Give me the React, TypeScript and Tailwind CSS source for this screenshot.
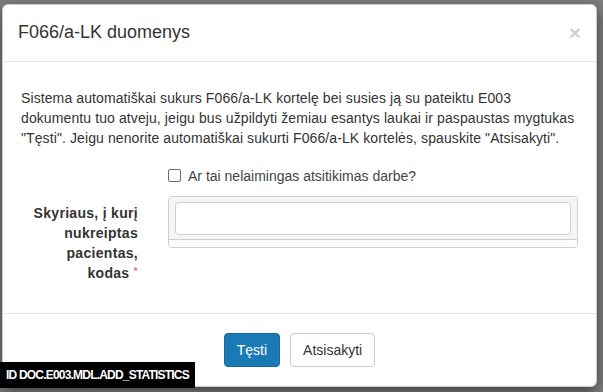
import React from 'react';

const FONT = { fontFamily: '"Liberation Sans", Arial, Helvetica, sans-serif' };

function FakeCheckbox() {
  return <span className="inline-block w-[13px] h-[13px] border border-[#6b6b6b] rounded-[2px] bg-white shrink-0" />;
}

export default function App() {
  return (
    <div className="relative w-[603px] h-[392px] overflow-hidden bg-[#7f7f7f] text-[#333]" style={FONT}>
      <div className="ml-[2px] mt-[4px] w-[595px] bg-white border border-black/20 rounded-[6px] shadow-[0_5px_15px_rgba(0,0,0,0.5)]">
        {/* header */}
        <div className="flex items-start justify-between px-[15px] pt-[15px] pb-[15px] border-b border-[#e5e5e5]">
          <h4 className="text-[18px] leading-[25.7px] text-[#333]">F066/a-LK duomenys</h4>
          <button className="mt-[2px] text-[21px] leading-none font-bold text-black/20">×</button>
        </div>

        {/* body */}
        <div className="px-[18px] pt-[26px] pb-[30px] text-[14px] leading-[20px]">
          <p className="tracking-[0.1px]">
            Sistema automatiškai sukurs F066/a-LK kortelę bei susies ją su pateiktu E003
            <br />
            dokumentu tuo atveju, jeigu bus užpildyti žemiau esantys laukai ir paspaustas mygtukas
            <br />
            "Tęsti". Jeigu nenorite automatiškai sukurti F066/a-LK kortelės, spauskite "Atsisakyti".
          </p>

          <div className="flex mt-[18px]">
            <div className="w-[147px] shrink-0" />
            <label className="flex items-center gap-[7px] text-[#444]">
              <FakeCheckbox />
              <span>Ar tai nelaimingas atsitikimas darbe?</span>
            </label>
          </div>

          <div className="flex gap-[30px] mt-[10px]">
            <label className="w-[117px] shrink-0 pt-[7px] text-right font-bold text-[#333] tracking-[0.3px]">
              Skyriaus, į kurį nukreiptas pacientas, kodas
              <span className="inline-block align-top mt-[3px] ml-[4px] leading-none text-[#d9534f] font-normal text-[11px]">*</span>
            </label>
            <div className="w-[410px] h-[52px] border border-[#cfcfcf] rounded-[4px] overflow-hidden flex flex-col">
              <div className="bg-[#f5f5f5] px-[6px] pt-[5px] pb-[4px] border-b border-[#cfcfcf]">
                <input className="block w-full h-[33px] bg-white border border-[#cfcfcf] rounded-[4px] outline-none" />
              </div>
              <div className="flex-1 bg-[#fcfcfc]" />
            </div>
          </div>
        </div>

        {/* footer */}
        <div className="flex justify-center gap-[10px] border-t border-[#e5e5e5] pt-[19px] pb-[19px] text-[14px] leading-[20px]">
          <button className="h-[34px] px-[12px] rounded-[4px] bg-[#1a7ab6] border border-[#15699e] text-white">Tęsti</button>
          <button className="h-[34px] px-[12px] rounded-[4px] bg-white border border-[#ccc] text-[#333]">Atsisakyti</button>
        </div>
      </div>

      <div className="absolute left-0 top-[362px] h-[26px] w-[195px] bg-black text-white font-bold text-[12px] tracking-[-0.8px] whitespace-nowrap flex items-center pl-[6px]">
        ID DOC.E003.MDL.ADD_STATISTICS
      </div>
    </div>
  );
}
